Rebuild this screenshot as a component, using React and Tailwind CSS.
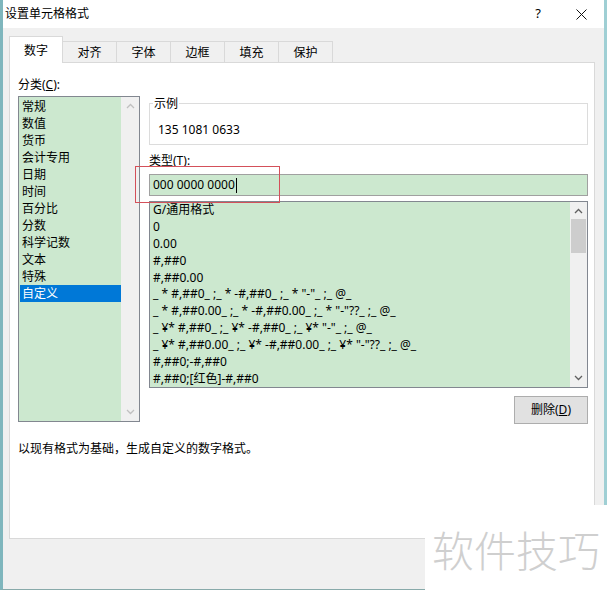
import React from 'react';

const categories = ['常规', '数值', '货币', '会计专用', '日期', '时间', '百分比', '分数', '科学记数', '文本', '特殊', '自定义'];

const formats = [
    'G/通用格式',
    '0',
    '0.00',
    '#,##0',
    '#,##0.00',
    '_ * #,##0_ ;_ * -#,##0_ ;_ * "-"_ ;_ @_',
    '_ * #,##0.00_ ;_ * -#,##0.00_ ;_ * "-"??_ ;_ @_',
    '_ ¥* #,##0_ ;_ ¥* -#,##0_ ;_ ¥* "-"_ ;_ @_',
    '_ ¥* #,##0.00_ ;_ ¥* -#,##0.00_ ;_ ¥* "-"??_ ;_ @_',
    '#,##0;-#,##0',
    '#,##0;[红色]-#,##0',
];

const tabs = ['数字', '对齐', '字体', '边框', '填充', '保护'];

const Chevron = ({ up, color }) => (
    <svg width="9" height="6" viewBox="0 0 9 6" fill="none">
        <path d={up ? 'M1 5 L4.5 1.5 L8 5' : 'M1 1 L4.5 4.5 L8 1'} stroke={color} strokeWidth="1.3" />
    </svg>
);

const App = () => {
    return (
        <div className="relative w-[607px] h-[593px] overflow-hidden bg-white font-['Noto_Sans','Noto_Sans_CJK_SC',sans-serif] text-[12px] text-black">
            <div className="flex flex-col h-[590px] border-l-[3px] border-r-[3px] border-b border-l-[#7fb6bd] border-r-[#9fcfd4] border-b-[#8aa]">
                {/* title bar */}
                <div className="flex items-center h-[28px] bg-white pl-[2px] shrink-0">
                    <span className="leading-none">设置单元格格式</span>
                    <span className="ml-auto mr-[35px] text-[13px]">?</span>
                    <svg width="11" height="11" viewBox="0 0 11 11" className="mr-[17px]">
                        <path d="M0.5 0.5 L10.5 10.5 M10.5 0.5 L0.5 10.5" stroke="#111" strokeWidth="1" />
                    </svg>
                </div>

                <div className="flex-1 flex flex-col bg-[#f0f0f0] pl-[6px] pr-[9px] pt-[8px]">
                    {/* tabs */}
                    <div className="flex items-end h-[27px] relative z-10">
                        {tabs.map((t, i) =>
                            i === 0 ? (
                                <div key={t} className="w-[54px] h-[27px] bg-white border border-b-0 border-[#d9d9d9] flex items-center justify-center pt-[1px]">
                                    {t}
                                </div>
                            ) : (
                                <div key={t} className="w-[54px] h-[22px] border border-l-0 border-b-0 border-[#d9d9d9] flex items-center justify-center">
                                    {t}
                                </div>
                            )
                        )}
                    </div>

                    {/* panel */}
                    <div className="bg-white border border-[#d9d9d9] -mt-px h-[477px] pl-[8px] pr-[6px] pt-[13px]">
                        <div className="flex gap-[9px]">
                            {/* left column */}
                            <div className="w-[122px] flex flex-col">
                                <div className="h-[17px] leading-[17px] mb-[3px]">
                                    分类(<span className="underline">C</span>):
                                </div>
                                <div className="h-[326px] border border-[#828790] flex">
                                    <div className="flex-1 bg-[#cce8cf] pt-[1px] pl-px">
                                        {categories.map((c) => (
                                            <div
                                                key={c}
                                                className={
                                                    c === '自定义'
                                                        ? 'h-[17px] leading-[17px] pl-[2px] bg-[#0078d7] text-white'
                                                        : 'h-[17px] leading-[17px] pl-[2px]'
                                                }
                                            >
                                                {c}
                                            </div>
                                        ))}
                                    </div>
                                    <div className="w-[18px] bg-[#f0f0f0] flex flex-col items-center justify-between py-[6px]">
                                        <Chevron up color="#c0c0c0" />
                                        <Chevron color="#c0c0c0" />
                                    </div>
                                </div>
                            </div>

                            {/* right column */}
                            <div className="flex-1 flex flex-col">
                                <div className="relative mt-[27px] h-[42px] border border-[#dcdcdc] pl-[8px] pt-[17px]">
                                    <span className="absolute -top-[9px] left-[3px] bg-white px-px leading-[17px]">示例</span>
                                    <div className="leading-[17px]">135 1081 0633</div>
                                </div>
                                <div className="mt-[7px] h-[17px] leading-[17px]">
                                    类型(<span className="underline">T</span>):
                                </div>
                                <div className="relative mt-[5px] h-[22px] border border-[#a0a0a0] bg-[#cce8cf] flex items-center pl-[3px]">
                                    <span>000 0000 0000</span>
                                    <span className="w-px h-[15px] bg-black ml-px" />
                                    {/* red annotation box */}
                                    <div className="absolute -left-[15px] -top-[9px] w-[145px] h-[37px] border border-[#d4505a]" />
                                </div>
                                <div className="mt-[5px] h-[187px] border border-[#828790] flex">
                                    <div className="flex-1 bg-[#cce8cf] pl-[3px] whitespace-pre">
                                        {formats.map((f) => (
                                            <div key={f} className="h-[16.9px] leading-[16.9px]">
                                                {f}
                                            </div>
                                        ))}
                                    </div>
                                    <div className="w-[17px] bg-[#f0f0f0] flex flex-col items-center pt-[6px] pb-[6px]">
                                        <Chevron up color="#606060" />
                                        <div className="w-[15px] h-[34px] bg-[#cdcdcd] mt-[5px]" />
                                        <div className="flex-1" />
                                        <Chevron color="#606060" />
                                    </div>
                                </div>
                                <div className="flex justify-end mt-[8px]">
                                    <div className="w-[74px] h-[28px] bg-[#e1e1e1] border border-[#adadad] flex items-center justify-center">
                                        删除(<span className="underline">D</span>)
                                    </div>
                                </div>
                            </div>
                        </div>
                        <div className="mt-[16px] leading-[17px]">以现有格式为基础，生成自定义的数字格式。</div>
                    </div>
                </div>
            </div>

            {/* watermark overlay */}
            <div className="absolute right-0 bottom-0 w-[182px] h-[88px] bg-white flex items-center justify-center">
                <span className="text-[42px] leading-none text-[#cfcfcf] font-['Noto_Sans_CJK_SC',sans-serif] font-light">软件技巧</span>
            </div>
        </div>
    );
};

export default App;
